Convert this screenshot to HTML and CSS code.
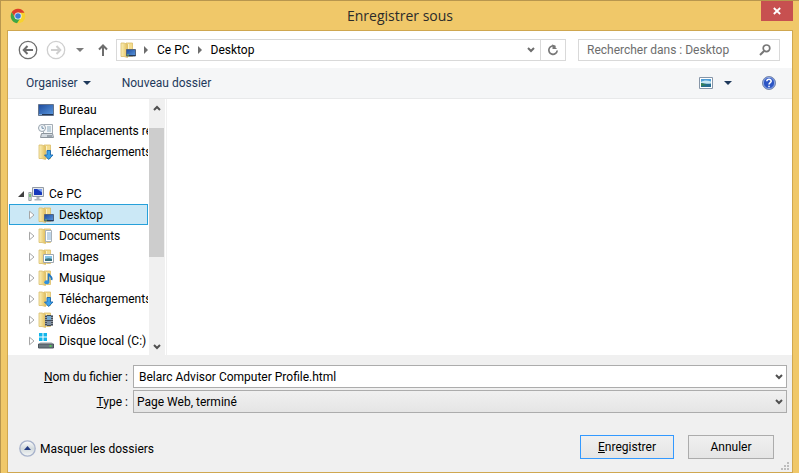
FILE: index.html
```html
<!DOCTYPE html>
<html lang="fr">
<head>
  <meta charset="UTF-8" />
  <meta name="viewport" content="width=device-width, initial-scale=1.0"/>
  <title>Enregistrer sous</title>
  <link rel="stylesheet" href="styles.css">
</head>
<body>

  <!-- shared icons -->
  <svg class="defs" width="0" height="0" aria-hidden="true">
    <defs>
      <linearGradient id="gold" x1="0" x2="1">
        <stop offset="0" stop-color="#fbf0b8"/>
        <stop offset="1" stop-color="#e2bf5c"/>
      </linearGradient>
      <linearGradient id="screen" x1="0" y1="0" x2="1" y2="1">
        <stop offset="0" stop-color="#1d4a9c"/>
        <stop offset="1" stop-color="#5b9ae0"/>
      </linearGradient>
      <symbol id="folder" viewBox="0 0 16 16">
        <path d="M6 1h6.500v13.500H6z" fill="#f3dc8e" stroke="#dcbd68" stroke-width=".8"/>
        <path d="M1 1h3l3.500 1.500v13L4 14.500H1z" fill="url(#gold)" stroke="#d9bc6a" stroke-width=".8"/>
        <path d="M8.500 2v12.500" stroke="#fbf1c6"/>
      </symbol>
      <symbol id="chevron" viewBox="0 0 8 6">
        <path d="M1 1l3 3 3-3" fill="none" stroke="currentColor" stroke-width="2"/>
      </symbol>
      <symbol id="expand" viewBox="0 0 6 10">
        <path d="M.5 1.200v7.600L5 5z" fill="#fff" stroke="#a6a6a6"/>
      </symbol>
      <symbol id="desktop" viewBox="0 0 16 16">
        <use href="#folder" width="16" height="16"/>
        <path d="M6.500 7.500h9v6.500h-9z" fill="url(#screen)" stroke="#53657f"/>
        <path d="M7 13.500h8.500" stroke="#243a5c"/>
        <path d="M7 13h2" stroke="#7fc34c"/>
      </symbol>
      <symbol id="download" viewBox="0 0 16 16">
        <use href="#folder" width="16" height="16"/>
        <path d="M9 6.500h3.500v4.500h2.500l-4.300 4.500L6.500 11H9z" fill="#3ba1ea" stroke="#1c69b0" stroke-width=".9"/>
      </symbol>
    </defs>
  </svg>

  <header class="titlebar">
    <svg class="chrome" width="16" height="16" viewBox="0 0 16 16">
      <circle cx="8" cy="8" r="7.300" fill="#f7d22e"/>
      <path d="M1.700 4.300A7.300 7.300 0 0 1 14.400 4.700H8L5 9.700z" fill="#dc3b2c"/>
      <path d="M1.700 4.300A7.300 7.300 0 0 0 7 15.200l3.300-5L5 9.700z" fill="#3da648"/>
      <circle cx="8" cy="8" r="3.600" fill="#f3f5f5"/>
      <circle cx="8" cy="8" r="2.800" fill="#3a7bd5"/>
    </svg>
    <h1>Enregistrer sous</h1>
    <button class="close" aria-label="Fermer">
      <svg width="8" height="8" viewBox="0 0 8 8"><path d="M.8 1l6.400 6M7.200 1L.8 7" stroke="#fff" stroke-width="1.800"/></svg>
    </button>
  </header>

  <main class="dialog">
    <nav class="navbar">
      <button class="icon-btn back" aria-label="Précédent">
        <svg width="20" height="20" viewBox="0 0 20 20" fill="none" stroke="#6d6d6d">
          <circle cx="10" cy="10" r="8.700" stroke-width="1.300"/>
          <path d="M15 10H6M9.500 6L5.700 10l3.800 4" stroke-width="2"/>
        </svg>
      </button>
      <button class="icon-btn forward" aria-label="Suivant">
        <svg width="20" height="20" viewBox="0 0 20 20" fill="none" stroke="#cfcfcf">
          <circle cx="10" cy="10" r="8.700" stroke-width="1.300"/>
          <path d="M5 10h9M10.500 6l3.800 4-3.800 4" stroke-width="2"/>
        </svg>
      </button>
      <button class="icon-btn recent" aria-label="Emplacements récents">
        <svg width="8" height="4" viewBox="0 0 8 4"><path d="M0 0h8L4 4z" fill="#7b7b7b"/></svg>
      </button>
      <button class="icon-btn up" aria-label="Dossier parent">
        <svg width="10" height="12" viewBox="0 0 10 12" fill="none" stroke="#6d6d6d" stroke-width="2"><path d="M5 12V2M1 5.500l4-4 4 4"/></svg>
      </button>
      <div class="address">
        <svg width="16" height="16"><use href="#desktop"/></svg>
        <svg class="sep" width="4" height="8" viewBox="0 0 4 8"><path d="M0 0v8l4-4z" fill="#6d6d6d"/></svg>
        <a href="#">Ce PC</a>
        <svg class="sep" width="4" height="8" viewBox="0 0 4 8"><path d="M0 0v8l4-4z" fill="#6d6d6d"/></svg>
        <a href="#">Desktop</a>
        <button class="icon-btn history" aria-label="Historique">
          <svg width="8" height="6"><use href="#chevron"/></svg>
        </button>
        <button class="icon-btn refresh" aria-label="Actualiser">
          <svg width="12" height="12" viewBox="0 0 12 12"><path d="M8.500 2.700A4.200 4.200 0 1 0 10.200 6.500" fill="none" stroke="#777" stroke-width="1.700"/><path d="M5.500 0v5h4.500z" fill="#777"/></svg>
        </button>
      </div>
      <label class="search">
        <input type="text" placeholder="Rechercher dans : Desktop" aria-label="Rechercher dans : Desktop">
        <svg width="12" height="12" viewBox="0 0 12 12" fill="none" stroke="#777"><circle cx="7.500" cy="4.300" r="3.300" stroke-width="1.700"/><path d="M5 7L1 11" stroke-width="2"/></svg>
      </label>
    </nav>

    <div class="toolbar">
      <button class="tool">Organiser
        <svg width="8" height="4" viewBox="0 0 8 4"><path d="M0 0h8L4 4z" fill="#1e395b"/></svg>
      </button>
      <button class="tool">Nouveau dossier</button>
      <button class="icon-btn view" aria-label="Affichage">
        <svg width="14" height="12" viewBox="0 0 14 12">
          <path d="M.5.5h13v11H.5z" fill="#fff" stroke="#8796a8"/>
          <path d="M2 2h10v8H2z" fill="#4f9dd6"/>
          <path d="M2 5c3-2 6-2 10-.5V7H2z" fill="#c8e8f3"/>
          <path d="M2 6c4 0 6 1.500 10 .5V10H2z" fill="#256c91"/>
          <path d="M2 6l6 2-6 1z" fill="#348255"/>
        </svg>
      </button>
      <button class="icon-btn view-more" aria-label="Autres options">
        <svg width="8" height="4" viewBox="0 0 8 4"><path d="M0 0h8L4 4z" fill="#1e395b"/></svg>
      </button>
      <button class="icon-btn help" aria-label="Aide">
        <svg width="14" height="14" viewBox="0 0 14 14">
          <circle cx="7" cy="7" r="6.500" fill="#2c55c4" stroke="#7b8bab"/>
          <circle cx="7" cy="7" r="5.600" fill="none" stroke="#b5c8ee" stroke-width=".7"/>
          <path d="M4.800 5.300c.2-2.800 4.500-2.600 4.400 0C9.200 6.800 7 6.700 7 8.600M7 9.700v1.500" fill="none" stroke="#fff" stroke-width="1.500"/>
        </svg>
      </button>
    </div>

    <div class="browser">
      <ul class="tree">
        <li>
          <svg width="16" height="16" viewBox="0 0 16 16"><path d="M.5 2.500h15v11H.5z" fill="url(#screen)" stroke="#64748c"/><path d="M1 12.500h14" stroke="#233653"/><path d="M1 12.500h3" stroke="#7aa7d9"/></svg>
          <span>Bureau</span>
        </li>
        <li>
          <svg width="16" height="16" viewBox="0 0 16 16">
            <path d="M5.500 1.500h9v9h-9z" fill="#f5f8fa" stroke="#a5adb5"/>
            <path d="M9 4h4M9 6h4M9 8h4" stroke="#8ba9bd"/>
            <path d="M3.500 10.500h11l1 4h-13z" fill="#d3dae0" stroke="#8c959d"/>
            <path d="M9 13h5" stroke="#65717c"/>
            <circle cx="4" cy="5" r="3.500" fill="#f3f7fa" stroke="#98a3ad"/>
            <path d="M4 3v2.300h2" fill="none" stroke="#547694" stroke-width=".8"/>
          </svg>
          <span>Emplacements récents</span>
        </li>
        <li>
          <svg width="16" height="16"><use href="#download"/></svg>
          <span>Téléchargements</span>
        </li>
        <li class="root">
          <svg class="arrow" width="6" height="6" viewBox="0 0 6 6"><path d="M6 0v6H0z" fill="#404040"/></svg>
          <svg width="16" height="16" viewBox="0 0 16 16">
            <path d="M4.500 1.500h11v9h-11z" fill="#e5e8ec" stroke="#939ba5"/>
            <path d="M6 3h8v6H6z" fill="#1638bb"/>
            <path d="M9 3h5v3.500z" fill="#779df2"/>
            <path d="M8.500 11h3v2h2v1.500h-7V13h2z" fill="#aeb5bd"/>
            <path d="M.8 6.500h2.400v8H.8z" fill="#d8dde0" stroke="#878f96" stroke-width=".8"/>
            <path d="M2 8v3" stroke="#35b52b"/>
          </svg>
          <span>Ce PC</span>
        </li>
        <li class="child selected">
          <svg class="arrow" width="6" height="10"><use href="#expand"/></svg>
          <svg width="16" height="16"><use href="#desktop"/></svg>
          <span>Desktop</span>
        </li>
        <li class="child">
          <svg class="arrow" width="6" height="10"><use href="#expand"/></svg>
          <svg width="16" height="16" viewBox="0 0 16 16"><use href="#folder" width="16" height="16"/><path d="M7.500 2.500h6v11h-6z" fill="#fff" stroke="#a8b1b9"/><path d="M9 5h4M9 7h4M9 9h4M9 11h4" stroke="#7eabd1"/></svg>
          <span>Documents</span>
        </li>
        <li class="child">
          <svg class="arrow" width="6" height="10"><use href="#expand"/></svg>
          <svg width="16" height="16" viewBox="0 0 16 16"><use href="#folder" width="16" height="16"/><path d="M5.500 5.500h10v8h-10z" fill="#fff" stroke="#a0a8af"/><path d="M7 7h7v5H7z" fill="#83c3e7"/><path d="M7 10c3-1 5-1 7 0v2H7z" fill="#3b7480"/></svg>
          <span>Images</span>
        </li>
        <li class="child">
          <svg class="arrow" width="6" height="10"><use href="#expand"/></svg>
          <svg width="16" height="16" viewBox="0 0 16 16"><use href="#folder" width="16" height="16"/><path d="M10.500 12V3.500c.5 2.500 4.500 3 3 6.500" fill="none" stroke="#2377c2" stroke-width="1.700"/><ellipse cx="8.800" cy="12.200" rx="2.500" ry="2" fill="#2f91dd"/></svg>
          <span>Musique</span>
        </li>
        <li class="child">
          <svg class="arrow" width="6" height="10"><use href="#expand"/></svg>
          <svg width="16" height="16"><use href="#download"/></svg>
          <span>Téléchargements</span>
        </li>
        <li class="child">
          <svg class="arrow" width="6" height="10"><use href="#expand"/></svg>
          <svg width="16" height="16" viewBox="0 0 16 16"><use href="#folder" width="16" height="16"/><path d="M7 3h8v11H7z" fill="#414a56"/><path d="M9 4h4v4H9z" fill="#70a8d1"/><path d="M9 9h4v4H9z" fill="#7c8fa3"/><path d="M8 3v11M14 3v11" stroke="#dce0e4" stroke-dasharray="1 1"/></svg>
          <span>Vidéos</span>
        </li>
        <li class="child">
          <svg class="arrow" width="6" height="10"><use href="#expand"/></svg>
          <svg width="16" height="16" viewBox="0 0 16 16">
            <path d="M1 0h3.500v3.500H1zM5.500 0H9v3.500H5.500zM1 4.500h3.500V8H1zM5.500 4.500H9V8H5.500z" fill="#12b5ea"/>
            <path d="M2.500 9h11l2 2.500H.5z" fill="#c8ced2"/>
            <path d="M.5 11h15v4H.5z" fill="#6b767e" stroke="#4b555d"/>
            <path d="M11.500 13h2" stroke="#4be34c" stroke-width="1.500"/>
          </svg>
          <span>Disque local (C:)</span>
        </li>
      </ul>
      <div class="scrollbar">
        <button class="icon-btn scroll-btn flip" aria-label="Haut"><svg width="8" height="6"><use href="#chevron"/></svg></button>
        <div class="track"><div class="thumb"></div></div>
        <button class="icon-btn scroll-btn" aria-label="Bas"><svg width="8" height="6"><use href="#chevron"/></svg></button>
      </div>
      <div class="files"></div>
    </div>

    <form class="panel" onsubmit="return false">
      <div class="fields">
        <label for="filename"><u>N</u>om du fichier :</label>
        <div class="combo">
          <input type="text" id="filename" value="Belarc Advisor Computer Profile.html">
          <svg width="8" height="6"><use href="#chevron"/></svg>
        </div>
        <label for="filetype"><u>T</u>ype :</label>
        <div class="combo">
          <select id="filetype">
            <option>Page Web, terminé</option>
          </select>
          <svg width="8" height="6"><use href="#chevron"/></svg>
        </div>
      </div>
      <div class="actions">
        <button type="button" class="toggle">
          <svg width="17" height="17" viewBox="0 0 17 17">
            <defs><linearGradient id="knob" x2="0" y2="1"><stop stop-color="#fff"/><stop offset=".5" stop-color="#d3dadd"/><stop offset="1" stop-color="#f5f7f7"/></linearGradient></defs>
            <circle cx="8.500" cy="8.500" r="7.700" fill="url(#knob)" stroke="#a7b2cb" stroke-width="1.300"/>
            <path d="M5 10h7L8.500 6z" fill="#243c83"/>
          </svg>
          Masquer les dossiers
        </button>
        <button class="btn save"><span><u>E</u>nregistrer</span></button>
        <button type="button" class="btn">Annuler</button>
      </div>
      <svg class="grip" width="8" height="8" viewBox="0 0 8 8"><path d="M6 0h2v2H6zM3 3h2v2H3zM6 3h2v2H6zM0 6h2v2H0zM3 6h2v2H3zM6 6h2v2H6z" fill="#bdbdbd"/></svg>
    </form>
  </main>

</body>
</html>
```
FILE: styles.css
```css
* {
  box-sizing: border-box;
}

body {
  margin: 0;
  min-height: 100vh;
  display: flex;
  flex-direction: column;
  padding: 0 6px 0 6px;
  border-top: 1px solid #b8964e;
  border-left: 1px solid #b8964e;
  background: #f0c869;
  color: #000;
  font-family: Roboto, "Open Sans", sans-serif;
  font-size: 12px;
  line-height: 16px;
}

svg {
  display: block;
  flex: none;
}

button, input, select {
  font: inherit;
  color: inherit;
}

a {
  color: inherit;
  text-decoration: none;
}

.defs {
  position: absolute;
}

.icon-btn {
  display: flex;
  align-items: center;
  justify-content: center;
  padding: 0;
  border: none;
  background: none;
}

/* title bar */
.titlebar {
  display: grid;
  grid-template-columns: 32px 1fr 32px;
  align-items: center;
  height: 29px;
}

.chrome {
  margin-left: 3px;
}

.titlebar h1 {
  margin: 0;
  text-align: center;
  font-family: "Open Sans", sans-serif;
  font-size: 14px;
  font-weight: 400;
  color: #2b2b2b;
}

.close {
  display: flex;
  align-items: center;
  justify-content: center;
  align-self: start;
  height: 20px;
  padding: 0;
  border: none;
  background: #c75050;
}

.dialog {
  flex: 1;
  display: flex;
  flex-direction: column;
  border: 1px solid #cfa750;
  background: #fff;
}

/* navigation */
.navbar {
  display: flex;
  align-items: center;
  height: 37px;
  padding: 0 12px 0 10px;
}

.forward {
  margin-left: 8px;
}

.recent {
  margin-left: 10px;
}

.up {
  margin: 0 8px 0 14px;
}

.address {
  flex: 1;
  display: flex;
  align-items: center;
  height: 22px;
  padding-left: 3px;
  border: 1px solid #d9d9d9;
}

.sep {
  margin: 0 9px 0 8px;
}

.history {
  width: 18px;
  height: 20px;
  margin-left: auto;
  color: #6d6d6d;
}

.refresh {
  width: 25px;
  height: 20px;
  border-left: 1px solid #d9d9d9;
}

.search {
  display: flex;
  align-items: center;
  width: 202px;
  height: 22px;
  margin-left: 12px;
  padding: 0 8px;
  border: 1px solid #d9d9d9;
}

.search input {
  flex: 1;
  min-width: 0;
  padding: 0;
  border: none;
  outline: none;
  background: none;
}

.search input::placeholder {
  color: #6d6d6d;
}

/* toolbar */
.toolbar {
  display: flex;
  align-items: center;
  height: 31px;
  padding: 0 16px 0 18px;
  border-bottom: 1px solid #e8e9ea;
  background: #f5f6f7;
}

.tool {
  display: flex;
  align-items: center;
  gap: 5px;
  margin-right: 31px;
  padding: 0;
  border: none;
  background: none;
  color: #1e395b;
}

.view {
  margin-left: auto;
}

.view-more {
  margin: 0 30px 0 11px;
}

/* folders and files */
.browser {
  flex: 1;
  display: flex;
}

.tree {
  width: 141px;
  margin: 0;
  padding: 0 1px 4px;
  list-style: none;
}

.tree li {
  display: flex;
  align-items: center;
  height: 21px;
  padding-left: 29px;
  overflow: hidden;
  white-space: nowrap;
}

.tree .child {
  padding-left: 20px;
}

.tree span {
  margin-left: 5px;
}

.tree .arrow {
  margin-right: 3px;
}

.tree .root {
  margin-top: 21px;
  padding-left: 9px;
}

.tree .root .arrow {
  margin-right: 4px;
}

.tree .selected {
  background: #cbe8f6;
  box-shadow: inset 0 0 0 1px #26a0da;
}

.scrollbar {
  display: flex;
  flex-direction: column;
  width: 16px;
  background: #f0f0f0;
  color: #505050;
}

.scroll-btn {
  height: 17px;
}

.flip svg {
  transform: rotate(180deg);
}

.track {
  flex: 1;
  padding-top: 12px;
}

.thumb {
  width: 15px;
  height: 129px;
  background: #cdcdcd;
}

.files {
  flex: 1;
  margin-left: 1px;
  border-left: 1px solid #f0f0f0;
}

/* file name, type and buttons */
.panel {
  position: relative;
  padding: 10px 5px 13px 11px;
  background: #f0f0f0;
}

.fields {
  display: grid;
  grid-template-columns: 109px 1fr;
  align-items: center;
  column-gap: 5px;
  row-gap: 2px;
}

.fields label {
  text-align: right;
}

.combo {
  position: relative;
  color: #505050;
}

.combo input, .combo select {
  display: block;
  width: 100%;
  height: 23px;
  padding: 0 20px 0 5px;
  border: 1px solid #acacac;
  border-radius: 0;
  outline: none;
  background: #fff;
  color: #000;
}

.combo select {
  appearance: none;
  padding-left: 3px;
  background: linear-gradient(#f0f0f0, #e5e5e5);
}

.combo svg {
  position: absolute;
  top: 9px;
  right: 4px;
}

.actions {
  display: flex;
  align-items: center;
  gap: 14px;
  margin-top: 22px;
  padding-right: 13px;
}

.toggle {
  display: flex;
  align-items: center;
  gap: 4px;
  margin-right: auto;
  padding: 3px 0 0;
  border: none;
  background: none;
}

.btn {
  width: 86px;
  height: 24px;
  padding: 0;
  border: 1px solid #acacac;
  background: linear-gradient(#f0f0f0, #e5e5e5);
}

.save {
  width: 94px;
  border-color: #3399ff;
}

.grip {
  position: absolute;
  right: 3px;
  bottom: 2px;
}
```
